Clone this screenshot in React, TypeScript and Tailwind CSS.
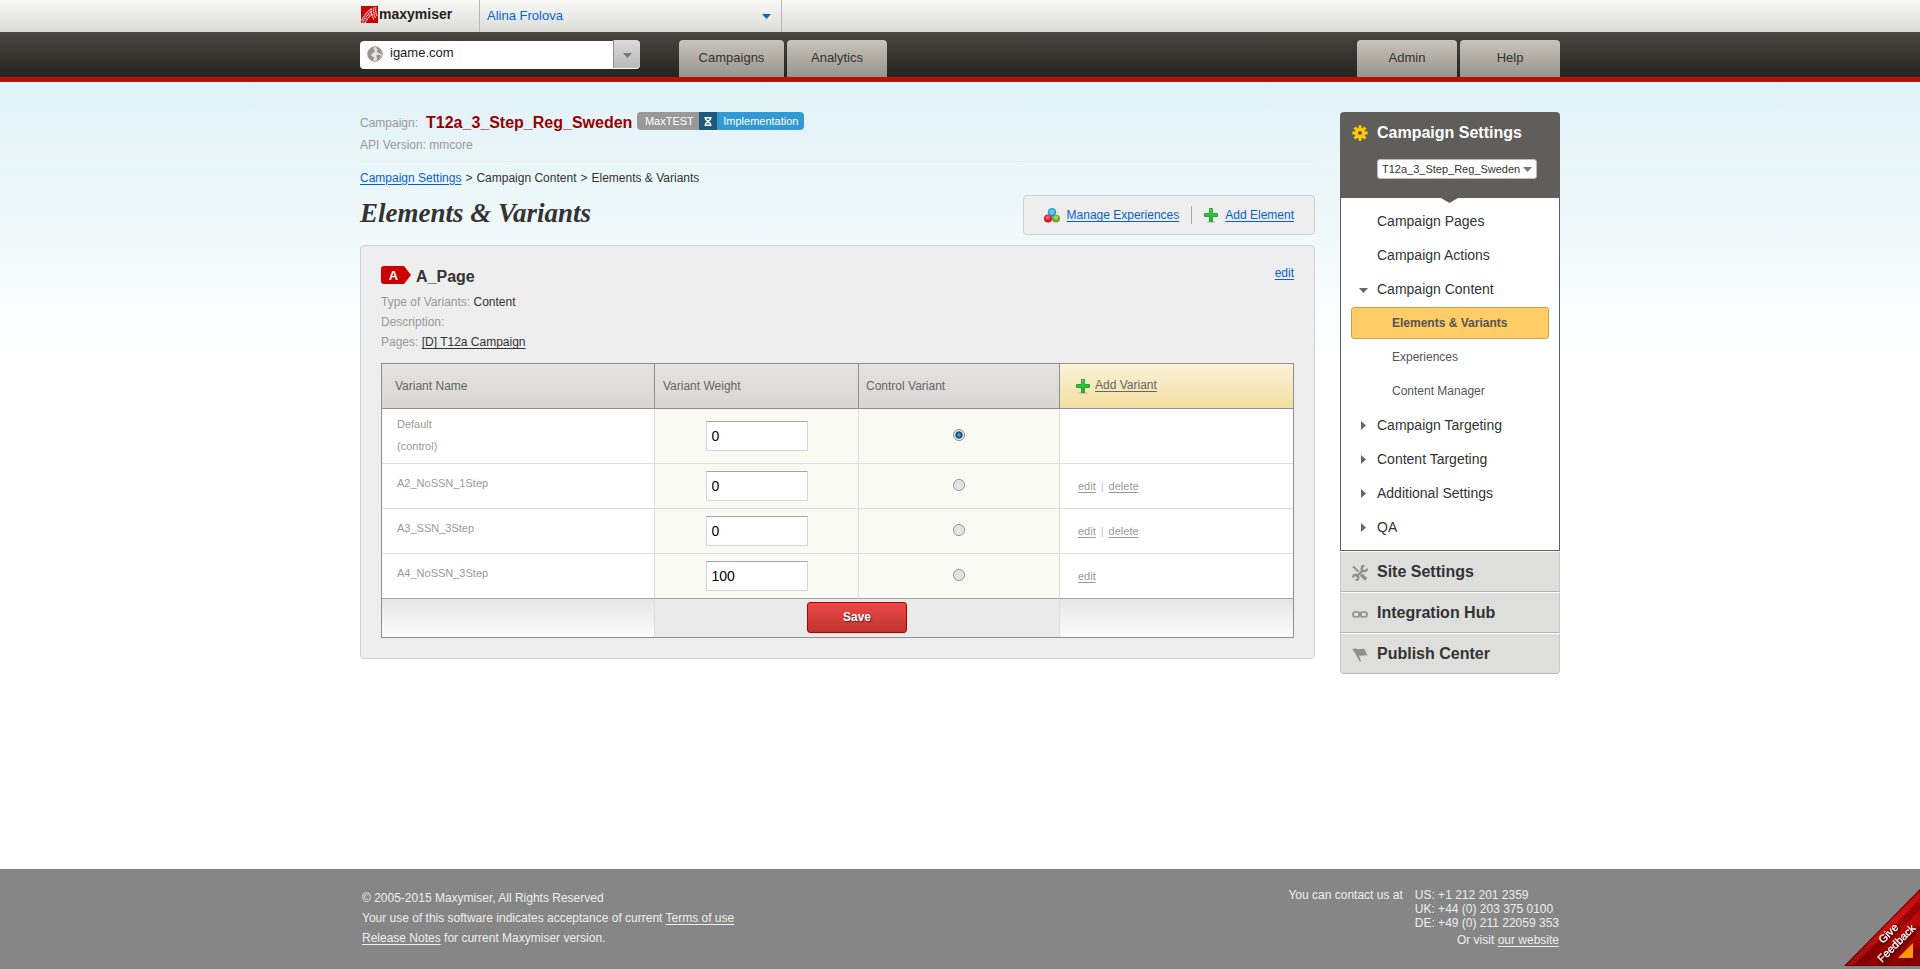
import React from "react";

function Plus() {
  return (
    <svg width="14" height="15" viewBox="0 0 14 15" aria-hidden="true" className="shrink-0">
      <defs>
        <linearGradient id="plus" x1="0" y1="0" x2="0" y2="1">
          <stop offset="0" stopColor="#5fd35f" />
          <stop offset="0.5" stopColor="#2dbf3a" />
          <stop offset="1" stopColor="#1fb52c" />
        </linearGradient>
      </defs>
      <ellipse cx="7" cy="14" rx="4.500" ry="1" fill="#000" opacity="0.15" />
      <path d="M5.500 .5h3v5h5v3h-5v5h-3v-5h-5v-3h5z" fill="url(#plus)" stroke="#27a535" />
    </svg>
  );
}

function Balls() {
  return (
    <svg width="16" height="15" viewBox="0 0 16 15" aria-hidden="true" className="shrink-0">
      <circle cx="4" cy="10.500" r="4" fill="#d4102c" />
      <circle cx="3.800" cy="9.500" r="2.300" fill="#f0566a" />
      <circle cx="12" cy="10.500" r="4" fill="#6aa524" />
      <circle cx="12" cy="9.500" r="2.300" fill="#a3d35c" />
      <circle cx="8" cy="4.200" r="4.200" fill="#1f97c4" />
      <circle cx="8" cy="3.800" r="2.900" fill="#5cc4ea" />
    </svg>
  );
}

function Down({ className }: { className: string }) {
  return (
    <svg width="9" height="5" viewBox="0 0 9 5" aria-hidden="true" className={className}>
      <path d="M0 0h9L4.500 5z" fill="currentColor" />
    </svg>
  );
}

function Gear() {
  return (
    <svg width="16" height="16" viewBox="-8 -8 16 16" aria-hidden="true">
      <g fill="#ffcc00">
        {[0, 45, 90, 135].map((a) => (
          <rect key={a} x="-1.5" y="-7.700" width="3" height="15.400" transform={`rotate(${a})`} />
        ))}
        <circle r="5.300" />
      </g>
      <circle r="2" fill="#5f5e5a" />
    </svg>
  );
}

function Tools() {
  return (
    <svg width="16" height="16" viewBox="0 0 16 16" aria-hidden="true" fill="none" stroke="#8f8f8d">
      <path d="M1 1.500l5.500 5" strokeWidth="1.800" />
      <path d="M9 9.500l5.200 5" strokeWidth="3.200" />
      <path d="M4.300 11.800L11.500 4.600" strokeWidth="2.200" />
      <path d="M15 3.600a2.700 2.700 0 1 1-2.600-2.800" strokeWidth="2.200" />
      <path d="M1 12.400a2.700 2.700 0 1 1 2.600 2.800" strokeWidth="2.200" />
    </svg>
  );
}

function Chain() {
  return (
    <svg width="16" height="16" viewBox="0 0 16 16" aria-hidden="true" fill="none" stroke="#8f8f8d" strokeWidth="1.700">
      <rect x="1" y="6" width="6.500" height="5" rx="2.200" />
      <rect x="8.500" y="6" width="6.500" height="5" rx="2.200" />
      <path d="M6 8.500h4" strokeWidth="1.300" />
    </svg>
  );
}

function Flag() {
  return (
    <svg width="16" height="16" viewBox="0 0 16 16" aria-hidden="true">
      <path d="M.3 2.800C1.500 1.200 3.500 1.400 5 2c2.500.8 4.500-1 7.500.2l3.200 6.600c-2.700-1.400-4.500.4-8 0L7 8.200l2 6.300H7.600L3.600 7 1.800 4z" fill="#8f8f8d" />
    </svg>
  );
}

function Logo() {
  return (
    <svg width="17" height="17" viewBox="0 0 17 17" aria-hidden="true">
      <rect width="17" height="17" fill="#cc0000" />
      <g fill="none" stroke="#f7d6d6" strokeDasharray="1.500 .5" strokeWidth="1.300">
        <path d="M.5 14.500C2.500 11 4.500 7.500 10 3" />
        <path d="M1.500 16.500C4 12.500 6 9 10.500 5.500" />
        <path d="M4 17C6 13 7.500 11 11 8" />
        <path d="M10.500 2.500c-.5 4 .5 8 2.500 11" />
        <path d="M12.700 1.500c-.5 4 .3 7.500 1.800 10.500" />
        <path d="M14.800 1c-.5 3.500 0 6 1.200 9" />
      </g>
    </svg>
  );
}

function Globe() {
  return (
    <svg width="16" height="16" viewBox="0 0 16 16" aria-hidden="true">
      <circle cx="8" cy="8" r="7.300" fill="#e6e6e4" stroke="#9b9a96" />
      <path
        d="M5 1.500l2 .3L6.500 3.500 8 4l-.5 2L5.800 7 5 8.500 3.500 8.300 4.500 10l2.200 1 .3 2-1.500 1.800C2.500 13.700.7 11 .8 8 .9 5 2.500 2.500 5 1.500zM9.500 1l3 1.300 2 2.700.5 3-1 .5-1-1.500-1.500.3-1.700-1.500.2-1.600 1.200-.8L9.500 2.700zM9.500 9l2.500-.5 2 1.500-1.300 3L10 14.700l-.3-2.700z"
        fill="#969591"
      />
    </svg>
  );
}

const link = "text-[#0a5fce] underline underline-offset-2";

function TopTab({ label, className }: { label: string; className: string }) {
  return (
    <a
      href="#"
      className={`flex h-[37px] items-center justify-center rounded-t bg-linear-to-b from-[#c9c4bc] to-[#98938b] pb-0.5 text-[13px] text-[#333] ${className}`}
    >
      {label}
    </a>
  );
}

function Header() {
  return (
    <header>
      <div className="h-8 bg-linear-to-b from-[#f9f9f5] to-[#dbdbd7]">
        <div className="mx-auto flex h-full max-w-[1200px]">
          <a href="#" className="flex w-[119px] items-start gap-px pt-1.5 pl-px">
            <Logo />
            <span className="text-sm leading-4 font-bold text-[#222]">maxymiser</span>
          </a>
          <button
            type="button"
            className="flex w-[303px] items-center justify-between border-x border-[#b5b8bf] pr-2.5 pl-[7px] text-[13px] text-[#0066d6]"
          >
            Alina Frolova
            <Down className="" />
          </button>
        </div>
      </div>
      <div className="h-[50px] border-b-[5px] border-[#b5120b] bg-linear-to-b from-[#4a4741] to-[#262421]">
        <div className="mx-auto flex max-w-[1200px] pt-2">
          <div className="relative h-7 w-[280px]">
            <select
              aria-label="Site"
              className="h-7 w-full appearance-none rounded-sm bg-white pb-1 pl-[30px] text-[13px] text-[#222]"
            >
              <option>igame.com</option>
            </select>
            <span className="pointer-events-none absolute top-1.5 left-[7px]">
              <Globe />
            </span>
            <span className="pointer-events-none absolute top-0 right-0 flex h-7 w-[27px] items-center justify-center rounded-r-sm border-l border-[#8c8c8c] bg-linear-to-b from-[#dadada] to-[#b9b9b9] text-[#777]">
              <Down className="mt-0.5" />
            </span>
          </div>
          <nav className="ml-[39px] flex flex-1 gap-[3px]">
            <TopTab label="Campaigns" className="w-[105px]" />
            <TopTab label="Analytics" className="w-[100px]" />
            <TopTab label="Admin" className="ml-auto w-[100px]" />
            <TopTab label="Help" className="w-[100px]" />
          </nav>
        </div>
      </div>
    </header>
  );
}

const variants = [
  { name: "Default", note: "(control)", weight: "0", actions: [] as string[] },
  { name: "A2_NoSSN_1Step", note: "", weight: "0", actions: ["edit", "delete"] },
  { name: "A3_SSN_3Step", note: "", weight: "0", actions: ["edit", "delete"] },
  { name: "A4_NoSSN_3Step", note: "", weight: "100", actions: ["edit"] },
];

function VariantTable() {
  const th = "h-[45px] border-r border-b border-[#8f8f8f] bg-linear-to-b from-[#e5e4e2] to-[#d9d5d4] text-left font-normal";
  return (
    <table className="mt-[11px] w-full table-fixed border-separate border-spacing-0 border border-[#8f8f8f]">
      <colgroup>
        <col className="w-[273px]" />
        <col className="w-[204px]" />
        <col className="w-[201px]" />
        <col />
      </colgroup>
      <thead className="text-xs text-[#666]">
        <tr>
          <th className={`${th} pl-[13px]`}>Variant Name</th>
          <th className={`${th} pl-2`}>Variant Weight</th>
          <th className={`${th} pl-[7px]`}>Control Variant</th>
          <th className="h-[45px] border-b border-[#8f8f8f] bg-linear-to-b from-[#fbf2d8] to-[#f3dfa0] pl-4 font-normal">
            <span className="flex items-center gap-[5px]">
              <Plus />
              <a href="#" className="pb-0.5 underline underline-offset-2">Add Variant</a>
            </span>
          </th>
        </tr>
      </thead>
      <tbody className="text-[11px] text-[#999]">
        {variants.map((v, i) => {
          const edge = i === variants.length - 1 ? "border-b-[#a5a5a5]" : "border-b-[#dcdcdc]";
          const height = v.note ? "h-[55px] pb-0.5" : "h-[45px] pb-1.5";
          return (
            <tr key={v.name}>
              <td className={`border-r border-b border-r-[#dcdcdc] bg-white pl-[15px] leading-[22px] ${edge} ${height}`}>
                {v.name}
                {v.note && <div>{v.note}</div>}
              </td>
              <td className={`border-r border-b border-r-[#dcdcdc] bg-[#fafaf5] ${edge}`}>
                <input
                  aria-label={`Weight of ${v.name}`}
                  defaultValue={v.weight}
                  className="mx-auto block h-[30px] w-[102px] border border-[#d4d4da] border-t-[#a5a5a5] bg-white px-[5px] text-sm text-black"
                />
              </td>
              <td className={`border-r border-b border-r-[#dcdcdc] bg-[#fafaf5] pb-0.5 ${edge}`}>
                <input
                  type="radio"
                  name="control"
                  aria-label={`Use ${v.name} as control`}
                  defaultChecked={i === 0}
                  className="mx-auto block size-3 appearance-none rounded-full border border-[#8a8c90] bg-radial from-[#e9e9ea] to-[#cfd2d6] shadow-[inset_0_0_0_1px_#f5f5f5] checked:from-[#38a7dc] checked:from-10% checked:via-[#11415f] checked:via-45% checked:to-[#eef0f2] checked:to-60%"
                />
              </td>
              <td className={`border-b bg-white pl-[18px] ${edge}`}>
                {v.actions.map((a, n) => (
                  <React.Fragment key={a}>
                    {n > 0 && <span className="px-[5px] text-[#a9c9ec]">|</span>}
                    <a href="#" className="underline underline-offset-2">{a}</a>
                  </React.Fragment>
                ))}
              </td>
            </tr>
          );
        })}
      </tbody>
      <tfoot>
        <tr>
          <td className="h-[38px] border-r border-[#dcdcdc] bg-linear-to-b from-[#e6e6e6] to-[#fcfcfc]" />
          <td colSpan={2} className="border-r border-[#dcdcdc] bg-[#ebebeb] pb-0.5">
            <button
              type="button"
              className="mx-auto block h-[31px] w-[100px] rounded-[3px] border border-[#b00000] bg-linear-to-b from-[#ea4848] to-[#c23430] text-xs font-bold text-white text-shadow-[1px_1px_1px_#0008]"
            >
              Save
            </button>
          </td>
          <td className="bg-linear-to-b from-[#e6e6e6] to-[#fcfcfc]" />
        </tr>
      </tfoot>
    </table>
  );
}

function Content() {
  return (
    <main className="min-w-0 flex-1 text-xs text-[#333]">
      <div className="border-b border-[#e6eced] pb-[5px] text-[#999]">
        <div className="flex h-[22px]">
          <span className="leading-[22px]">Campaign:</span>
          <strong className="ml-2 text-base leading-[22px] text-[#990000]">T12a_3_Step_Reg_Sweden</strong>
          <span className="ml-[5px] flex h-[18px] overflow-hidden rounded text-[11px] leading-[18px] text-white">
            <span className="w-[62px] bg-[#999] pl-0.5 text-center">MaxTEST</span>
            <span className="flex w-[18px] items-center justify-center bg-[#1f5a7a]">
              <svg width="8" height="9" viewBox="0 0 8 9" aria-hidden="true" fill="none" stroke="#fff">
                <path d="M.5 .8h7M.5 8.200h7" strokeWidth="1.500" />
                <path d="M1.700 1v1.500L6.300 6.500V8M6.300 1v1.500L1.700 6.500V8" strokeWidth="1.500" />
              </svg>
            </span>
            <span className="w-[87px] bg-[#3399d1] text-center">Implementation</span>
          </span>
        </div>
        <p className="leading-[22px]">API Version: mmcore</p>
      </div>
      <nav className="flex h-[33px] items-center gap-1 pb-0.5">
        <a href="#" className={link}>Campaign Settings</a>
        <span>&gt;</span>
        <span>Campaign Content</span>
        <span>&gt;</span>
        <span>Elements &amp; Variants</span>
      </nav>
      <div className="flex justify-between">
        <h1 className="font-['Liberation_Serif',serif] text-[27px] leading-9 font-bold italic">Elements &amp; Variants</h1>
        <div className="flex h-10 items-center rounded border border-[#d0d0d0] bg-[#eee] px-5">
          <Balls />
          <a href="#" className={`ml-[7px] ${link}`}>Manage Experiences</a>
          <span className="mx-3 h-[18px] w-px bg-[#aaa]" />
          <Plus />
          <a href="#" className={`ml-[7px] ${link}`}>Add Element</a>
        </div>
      </div>
      <section className="mt-2.5 rounded border border-[#d0d0d0] bg-[#eee] p-5">
        <div className="flex h-[26px] items-start">
          <svg width="30" height="18" viewBox="0 0 30 18" aria-hidden="true">
            <path d="M3 0h20l7 9-7 9H3a3 3 0 0 1-3-3V3a3 3 0 0 1 3-3z" fill="#cc0000" />
            <text x="12.500" y="14" textAnchor="middle" fontSize="13" fontWeight="bold" fill="#fff">A</text>
          </svg>
          <h2 className="ml-[5px] text-base leading-[22px] font-bold">A_Page</h2>
          <a href="#" className={`ml-auto leading-[14px] ${link}`}>edit</a>
        </div>
        <div className="leading-5 text-[#999]">
          <p>Type of Variants: <span className="text-[#333]">Content</span></p>
          <p>Description:</p>
          <p>Pages: <a href="#" className="text-[#333] underline underline-offset-2">[D] T12a Campaign</a></p>
        </div>
        <VariantTable />
      </section>
    </main>
  );
}

function MenuItem({ label, marker }: { label: string; marker?: "open" | "closed" }) {
  return (
    <li>
      <a href="#" className="flex h-[34px] items-center text-sm text-[#333]">
        <span className="flex w-9 justify-center pl-2 text-[#666]">
          {marker === "open" && <Down className="mt-0.5" />}
          {marker === "closed" && (
            <svg width="5" height="9" viewBox="0 0 5 9" aria-hidden="true">
              <path d="M0 0v9l5-4.500z" fill="currentColor" />
            </svg>
          )}
        </span>
        {label}
      </a>
    </li>
  );
}

function SubItem({ label }: { label: string }) {
  return (
    <li>
      <a href="#" className="flex h-[34px] items-center pl-[51px] text-xs text-[#555]">{label}</a>
    </li>
  );
}

function SideSection({ label, icon, last }: { label: string; icon: React.ReactNode; last?: boolean }) {
  return (
    <a
      href="#"
      className={`flex h-[41px] items-center border border-t-white border-r-[#c8c8c8] border-b-[#b5b5b5] border-l-[#c8c8c8] bg-[#dededc] pl-[11px] text-base font-bold text-[#333] ${last ? "rounded-b" : ""}`}
    >
      <span className="mt-0.5 w-[25px]">{icon}</span>
      {label}
    </a>
  );
}

function Sidebar() {
  return (
    <aside className="w-[220px] shrink-0">
      <div className="relative h-[86px] rounded-t bg-[#5f5e5a] pt-2">
        <h2 className="flex items-center pt-px pl-3 text-base font-bold text-white">
          <span className="w-[25px]"><Gear /></span>
          Campaign Settings
        </h2>
        <div className="relative mt-3.5 ml-[37px] w-[160px]">
          <select
            aria-label="Campaign"
            className="block h-5 w-full appearance-none rounded-[3px] border border-[#bbb] bg-white pl-1 text-[11px] text-[#333]"
          >
            <option>T12a_3_Step_Reg_Sweden</option>
          </select>
          <Down className="pointer-events-none absolute top-2 right-[5px] text-[#777]" />
        </div>
        <svg width="17" height="5" viewBox="0 0 17 5" aria-hidden="true" className="absolute top-full left-[101px]">
          <path d="M0 0h17L8.500 5z" fill="#5f5e5a" />
        </svg>
      </div>
      <ul className="border-x border-b border-[#5f5e5a] bg-white py-1.5">
        <MenuItem label="Campaign Pages" />
        <MenuItem label="Campaign Actions" />
        <MenuItem label="Campaign Content" marker="open" />
        <li>
          <a
            href="#"
            className="mx-2.5 my-px flex h-8 items-center rounded-[3px] border border-[#c9a24e] bg-[#ffcc66] pl-10 text-xs font-bold text-[#555]"
          >
            Elements &amp; Variants
          </a>
        </li>
        <SubItem label="Experiences" />
        <SubItem label="Content Manager" />
        <MenuItem label="Campaign Targeting" marker="closed" />
        <MenuItem label="Content Targeting" marker="closed" />
        <MenuItem label="Additional Settings" marker="closed" />
        <MenuItem label="QA" marker="closed" />
      </ul>
      <SideSection label="Site Settings" icon={<Tools />} />
      <SideSection label="Integration Hub" icon={<Chain />} />
      <SideSection label="Publish Center" icon={<Flag />} last />
    </aside>
  );
}

function Footer() {
  return (
    <footer className="bg-[#868686] text-xs text-[#eee]">
      <div className="mx-auto flex max-w-[1200px] justify-between pt-[19px] pr-px pb-[21px] pl-0.5">
        <div className="leading-5">
          <p>© 2005-2015 Maxymiser, All Rights Reserved</p>
          <p>Your use of this software indicates acceptance of current <a href="#" className="underline underline-offset-2">Terms of use</a></p>
          <p><a href="#" className="underline underline-offset-2">Release Notes</a> for current Maxymiser version.</p>
        </div>
        <div className="flex gap-3 leading-[14px]">
          <p>You can contact us at</p>
          <div>
            <p>US: +1 212 201 2359</p>
            <p>UK: +44 (0) 203 375 0100</p>
            <p>DE: +49 (0) 211 22059 353</p>
            <p className="mt-[3px] text-right">Or visit <a href="#" className="underline underline-offset-2">our website</a></p>
          </div>
        </div>
      </div>
    </footer>
  );
}

function Feedback() {
  return (
    <a href="#" aria-label="Give Feedback" className="fixed right-0 bottom-0">
      <svg width="78" height="82" viewBox="0 0 78 82">
        <defs>
          <linearGradient id="ribbon" x1="0" y1="0" x2="0" y2="1">
            <stop offset="0" stopColor="#b30000" />
            <stop offset="0.4" stopColor="#c20808" />
            <stop offset="1" stopColor="#8a0000" />
          </linearGradient>
          <clipPath id="corner">
            <path d="M2 79L78 2v77z" />
          </clipPath>
        </defs>
        <g clipPath="url(#corner)">
          <path d="M2 79L78 2v77z" fill="url(#ribbon)" />
          <path d="M17 79L78 18M39 79L78 40M61 79L78 62" stroke="#600" strokeWidth="7" opacity="0.4" />
          <path d="M7 79L78 8" stroke="#f66" strokeWidth="5" opacity="0.15" />
          <path d="M2 79L78 2M2 79h76" stroke="#700" strokeWidth="2" />
        </g>
        <path d="M56 71l15-15v15z" fill="#ff9900" />
        <g fontSize="11" textAnchor="middle" fill="#fff" stroke="#fff" strokeWidth="0.300" className="drop-shadow-[1px_1px_1px_#300]">
          <text transform="translate(49 49) rotate(-45)">Give</text>
          <text transform="translate(57 59) rotate(-45)">Feedback</text>
        </g>
      </svg>
    </a>
  );
}

export default function App() {
  return (
    <div className="flex min-h-screen flex-col bg-white font-['Liberation_Sans',Arial,sans-serif]">
      <Header />
      <div className="flex-1 bg-[linear-gradient(#e0f2f7,#fff_280px)] pt-[30px] pb-8">
        <div className="mx-auto flex max-w-[1200px] items-start gap-[25px]">
          <Content />
          <Sidebar />
        </div>
      </div>
      <Footer />
      <Feedback />
    </div>
  );
}
